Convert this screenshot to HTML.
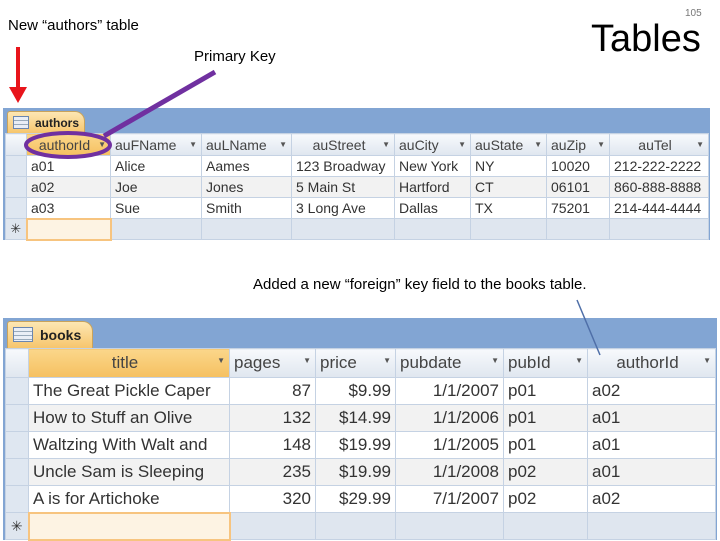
<!DOCTYPE html>
<html><head><style>
body{margin:0;width:720px;height:540px;background:#fff;position:relative;overflow:hidden;font-family:"Liberation Sans",sans-serif;}
.abs{position:absolute}
.frame{position:absolute;background:#82a5d3;}
table{border-collapse:collapse;table-layout:fixed;position:absolute;}
td{border:1px solid #c5d2e3;padding:0 4px;white-space:nowrap;overflow:hidden;color:#333;}
tr.h td{background:linear-gradient(#f7f9fc,#dfe6ef);color:#444;}
tr.h td.k{background:linear-gradient(#fbd68a,#f5c060);}
td.s{background:#dfe7f1;padding:0;}
tr.alt td{background:#f2f2f2}
tr.alt td.s{background:#dfe7f1}
tr.n td{background:#dfe6ef}
tr.n td.sel{background:#fdf3e3;border:2px solid #f7c47f}
.r{text-align:right}
.c{text-align:center}
.dd{float:right;font-size:8px;color:#555;margin-top:3px}
.tab{position:absolute;background:linear-gradient(#fde7b3,#f6c46a);border:1px solid #c9a35b;border-bottom:none;border-radius:3px 10px 0 0;font-weight:bold;color:#222;}
</style></head><body>
<div class="abs" style="left:8px;top:17px;font-size:15px;">New “authors” table</div>
<div class="abs" style="left:194px;top:48px;font-size:15px;">Primary Key</div>
<div class="abs" style="left:685px;top:8px;font-size:10px;color:#777;">105</div>
<div class="abs" style="left:591px;top:18px;font-size:38px;">Tables</div>
<div class="abs" style="left:253px;top:276px;font-size:15px;">Added a new “foreign” key field to the books table.</div>

<div class="frame" style="left:3px;top:108px;width:707px;height:132px;"></div>
<div class="tab" style="left:7px;top:111px;width:76px;height:22px;font-size:12px;line-height:22px;"><span style="display:inline-block;width:14px;height:11px;border:1px solid #6a86b0;background:repeating-linear-gradient(#e9eef6 0 3px,#9ab 3px 4px);margin:0 6px 0 5px;vertical-align:-2px"></span>authors</div>
<table style="left:5px;top:133px;font-size:14px;background:#fff;">
<colgroup><col style="width:21px"><col style="width:84px"><col style="width:91px"><col style="width:90px"><col style="width:103px"><col style="width:76px"><col style="width:76px"><col style="width:63px"><col style="width:99px"></colgroup>
<tr class="h" style="height:22px"><td class="s"></td><td class="k c">authorId<span class="dd">▼</span></td><td>auFName<span class="dd">▼</span></td><td>auLName<span class="dd">▼</span></td><td class="c">auStreet<span class="dd">▼</span></td><td>auCity<span class="dd">▼</span></td><td>auState<span class="dd">▼</span></td><td>auZip<span class="dd">▼</span></td><td class="c">auTel<span class="dd">▼</span></td></tr>
<tr style="height:21px"><td class="s"></td><td>a01</td><td>Alice</td><td>Aames</td><td>123 Broadway</td><td>New York</td><td>NY</td><td>10020</td><td>212-222-2222</td></tr>
<tr class="alt" style="height:21px"><td class="s"></td><td>a02</td><td>Joe</td><td>Jones</td><td>5 Main St</td><td>Hartford</td><td>CT</td><td>06101</td><td>860-888-8888</td></tr>
<tr style="height:21px"><td class="s"></td><td>a03</td><td>Sue</td><td>Smith</td><td>3 Long Ave</td><td>Dallas</td><td>TX</td><td>75201</td><td>214-444-4444</td></tr>
<tr class="n" style="height:21px"><td class="s" style="text-align:center;font-size:13px">✳</td><td class="sel"></td><td></td><td></td><td></td><td></td><td></td><td></td><td></td></tr>
</table>

<div class="frame" style="left:3px;top:318px;width:714px;height:222px;"></div>
<div class="tab" style="left:7px;top:321px;width:84px;height:27px;font-size:14px;line-height:27px;"><span style="display:inline-block;width:18px;height:13px;border:1px solid #6a86b0;background:repeating-linear-gradient(#e9eef6 0 3px,#9ab 3px 4px);margin:0 7px 0 5px;vertical-align:-2px"></span>books</div>
<table style="left:5px;top:348px;font-size:17px;background:#fff;">
<colgroup><col style="width:23px"><col style="width:201px"><col style="width:86px"><col style="width:80px"><col style="width:108px"><col style="width:84px"><col style="width:128px"></colgroup>
<tr class="h" style="height:29px"><td class="s"></td><td class="k c">title<span class="dd">▼</span></td><td>pages<span class="dd">▼</span></td><td>price<span class="dd">▼</span></td><td>pubdate<span class="dd">▼</span></td><td>pubId<span class="dd">▼</span></td><td class="c">authorId<span class="dd">▼</span></td></tr>
<tr style="height:27px"><td class="s"></td><td>The Great Pickle Caper</td><td class="r">87</td><td class="r">$9.99</td><td class="r">1/1/2007</td><td>p01</td><td>a02</td></tr>
<tr class="alt" style="height:27px"><td class="s"></td><td>How to Stuff an Olive</td><td class="r">132</td><td class="r">$14.99</td><td class="r">1/1/2006</td><td>p01</td><td>a01</td></tr>
<tr style="height:27px"><td class="s"></td><td>Waltzing With Walt and</td><td class="r">148</td><td class="r">$19.99</td><td class="r">1/1/2005</td><td>p01</td><td>a01</td></tr>
<tr class="alt" style="height:27px"><td class="s"></td><td>Uncle Sam is Sleeping</td><td class="r">235</td><td class="r">$19.99</td><td class="r">1/1/2008</td><td>p02</td><td>a01</td></tr>
<tr style="height:27px"><td class="s"></td><td>A is for Artichoke</td><td class="r">320</td><td class="r">$29.99</td><td class="r">7/1/2007</td><td>p02</td><td>a02</td></tr>
<tr class="n" style="height:27px"><td class="s" style="text-align:center;font-size:14px">✳</td><td class="sel"></td><td></td><td></td><td></td><td></td><td></td></tr>
</table>

<svg class="abs" style="left:0;top:0" width="720" height="540">
<line x1="18" y1="47" x2="18" y2="92" stroke="#e8141b" stroke-width="4"/>
<polygon points="9,87 27,87 18,103" fill="#e8141b"/>
<line x1="215" y1="72" x2="104" y2="136" stroke="#7030a0" stroke-width="5"/>
<ellipse cx="68" cy="145" rx="42" ry="12" fill="none" stroke="#7030a0" stroke-width="4"/>
<line x1="577" y1="300" x2="600" y2="355" stroke="#4f6fa8" stroke-width="1.5"/>
</svg>
</body></html>
